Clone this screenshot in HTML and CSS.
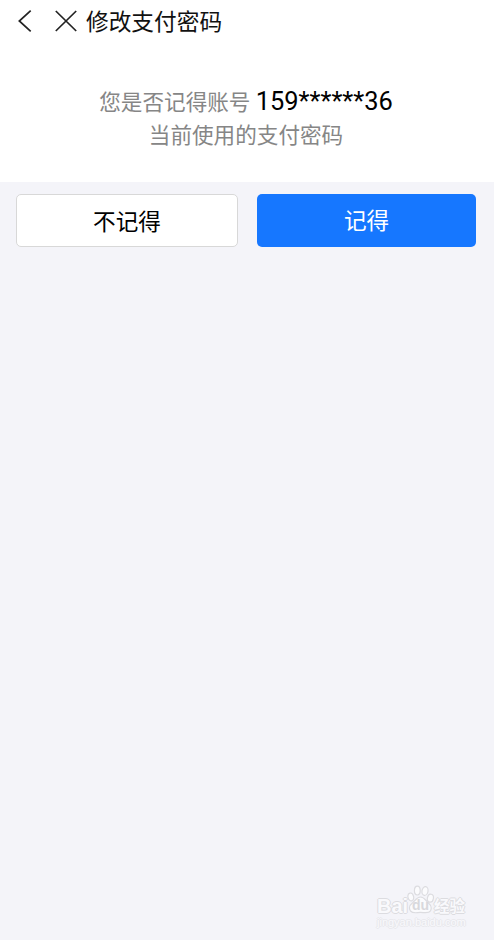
FILE: index.html
```
<!DOCTYPE html>
<html lang="zh-CN">
<head>
  <meta charset="UTF-8">
  <title>修改支付密码</title>
  <link rel="stylesheet" href="styles.css">
</head>
<body>

  <header class="nav">
    <svg class="icon-back" width="14" height="24" viewBox="0 0 14 24">
      <path d="M12.7 1.6 L1.3 12 L12.7 22.4" />
    </svg>
    <svg class="icon-close" width="22" height="22" viewBox="0 0 22 22">
      <path d="M0.8 1 L21.2 21 M21.2 1 L0.8 21" />
    </svg>
    <h1>修改支付密码</h1>
  </header>

  <main>
    <div class="prompt">
      <p>您是否记得账号 <span class="account">159******36</span></p>
      <p>当前使用的支付密码</p>
    </div>

    <div class="buttons">
      <button class="btn btn-no">不记得</button>
      <button class="btn btn-yes">记得</button>
    </div>
  </main>

  <div class="watermark">
    <div class="brand">
      <span class="bai">Bai</span>
      <span class="paw">
        <svg width="28" height="29" viewBox="0 0 28 29">
          <ellipse cx="3.8" cy="12" rx="2.8" ry="4" transform="rotate(-12 3.8 12)" />
          <ellipse cx="10.3" cy="5.6" rx="2.9" ry="4.4" />
          <ellipse cx="18" cy="6" rx="3" ry="4.4" transform="rotate(10 18 6)" />
          <ellipse cx="23.4" cy="13.2" rx="3" ry="4" transform="rotate(12 23.4 13.2)" />
          <path d="M13.5 12 C17 12 18.5 15.2 21 17.5 C24.5 20.5 25 23 23.5 25.8 C21.5 29 17 27.4 13.5 27.4 C10 27.4 6 29 3.5 26 C1.6 23.2 2.5 20.2 5.6 17.8 C8.5 15.2 10 12 13.5 12 Z" />
        </svg>
        <span class="du">du</span>
      </span>
      <span class="jingyan">经验</span>
    </div>
    <div class="site">jingyan.baidu.com</div>
  </div>

</body>
</html>
```
FILE: styles.css
```
* {
  box-sizing: border-box;
}

body {
  margin: 0;
  height: 940px;
  overflow: hidden;
  background: #f4f4f9;
  font-family: Roboto, "Noto Sans CJK SC", sans-serif;
  color: #000;
}

.nav {
  display: flex;
  align-items: center;
  height: 42px;
  padding-left: 18px;
  background: #fff;
}

.nav svg {
  fill: none;
  stroke: #222;
  stroke-width: 1.7;
}

.icon-close {
  margin-left: 23px;
}

h1 {
  margin: 0 0 0 9px;
  padding-top: 3px;
  font-size: 22.7px;
  font-weight: 400;
  line-height: 39px;
  color: #111;
}

.prompt {
  height: 140px;
  padding-top: 42px;
  background: #fff;
  text-align: center;
  color: #868686;
}

.prompt p {
  height: 34px;
  margin: 0;
  padding-right: 2px;
  font-size: 21.6px;
  line-height: 34px;
}

.prompt p + p {
  padding-top: 1px;
}

.account {
  font-size: 25.4px;
  color: #000;
}

.buttons {
  display: flex;
  gap: 19px;
  padding: 12px 18px 0 16px;
}

.btn {
  height: 53px;
  border: none;
  border-radius: 5px;
  font-family: inherit;
  font-size: 22.6px;
  line-height: 48px;
}

.btn-no {
  width: 222px;
  padding: 4px 0 0;
  border: 1px solid #d8d8d8;
  background: #fff;
  color: #000;
  line-height: 47px;
}

.btn-yes {
  width: 219px;
  padding: 2px 0 0;
  background: #1677ff;
  color: #fff;
}

/* watermark over the bottom right corner */
.watermark {
  position: absolute;
  right: 24px;
  bottom: 10px;
  width: 93px;
  color: #f9f9fc;
  font-family: "Liberation Sans", "Noto Sans CJK SC", sans-serif;
  text-shadow: 1px 0 #dcdce0, -1px 0 #dcdce0, 0 1px #dcdce0, 0 -1px #dcdce0;
}

.brand {
  display: flex;
  align-items: flex-end;
  height: 30px;
  font-weight: bold;
}

.bai {
  width: 30px;
  font-size: 20px;
  line-height: 18px;
}

.paw {
  position: relative;
  width: 27px;
  height: 30px;
}

.paw svg {
  display: block;
  fill: #fbfbfd;
  stroke: #dcdce0;
  stroke-width: 1.2;
}

.du {
  position: absolute;
  left: 5px;
  bottom: 3px;
  color: #d8d8dc;
  font-size: 14px;
  line-height: 14px;
  text-shadow: none;
}

.jingyan {
  font-size: 15.5px;
  line-height: 17px;
}

.site {
  font-size: 11px;
  line-height: 15px;
  text-shadow: 1px 0 #e8e8ec, -1px 0 #e8e8ec, 0 1px #e8e8ec, 0 -1px #e8e8ec;
}
```
